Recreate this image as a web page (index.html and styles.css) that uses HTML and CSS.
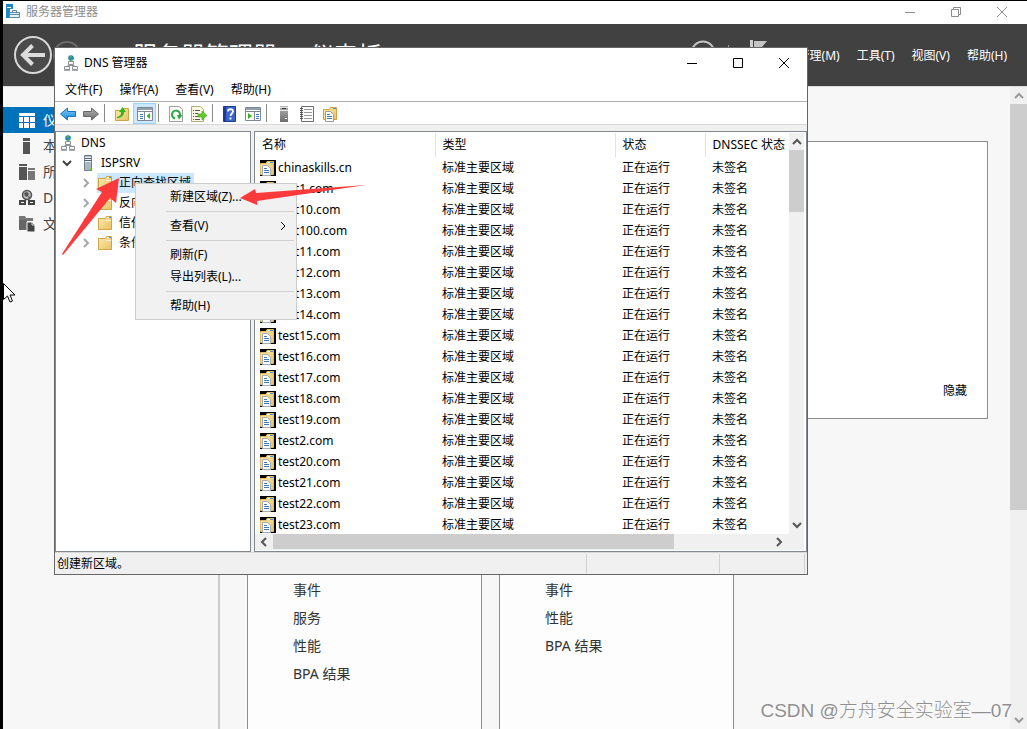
FILE: index.html
```html
<!DOCTYPE html>
<html lang="zh-CN">
<head>
<meta charset="utf-8">
<title>服务器管理器</title>
<link rel="stylesheet" href="styles.css">
</head>
<body>
<svg class="sprite" aria-hidden="true">
  <defs>
    <linearGradient id="gFold" x1="0" y1="0" x2="1" y2="1"><stop offset="0" stop-color="#fdebaf"/><stop offset="1" stop-color="#e8c264"/></linearGradient>
    <linearGradient id="gBlue" x1="0" y1="0" x2="0" y2="1"><stop offset="0" stop-color="#7fd2fb"/><stop offset="1" stop-color="#1583d6"/></linearGradient>
    <linearGradient id="gGray" x1="0" y1="0" x2="0" y2="1"><stop offset="0" stop-color="#b5b5b5"/><stop offset="1" stop-color="#6d6d6d"/></linearGradient>
  </defs>
  <symbol id="folder" viewBox="0 0 16 16">
    <path d="M1.500 3.500h7l1-2h5v13h-13z" fill="url(#gFold)" stroke="#d0a548"/>
    <path d="M10 2.500h3" stroke="#fff"/><path d="M12 2.500h2" stroke="#3f95dd"/>
    <path d="M9 5.500h5" stroke="#fff3c8"/>
  </symbol>
  <symbol id="zone" viewBox="0 0 16 16">
    <path d="M0 0h16v16H0z" fill="#000"/>
    <path d="M.5 3.500H6l1-2h6.500v13H.5z" fill="url(#gFold)" stroke="#e3bd62"/>
    <path d="M8 2.500h2" stroke="#fff"/><path d="M10 2.500h3" stroke="#3f95dd"/>
    <path d="M2.500 5.500h5l3 3v7h-8z" fill="#fff" stroke="#a8acb4"/>
    <path d="M4 8.500h3M4 10.500h5M4 12.500h5" stroke="#3c78c0"/>
  </symbol>
  <symbol id="dns" viewBox="0 0 16 16">
    <circle cx="8" cy="3" r="2.800" fill="#2f74c8"/><path d="M6 2l2-1.500L9.500 2 7.500 3.500zM8 4h2l-1 2H7z" fill="#35c04a"/>
    <path d="M5.500 6.500h5v3h-5z" fill="#f4f4f4" stroke="#8c9097"/>
    <path d="M4.500 10.500h7M1.500 11.500h5v3h-5zM9.500 11.500h5v3h-5z" fill="#f4f4f4" stroke="#8c9097"/>
    <path d="M1 15.500h6M9 15.500h6" stroke="#a8acb4"/>
  </symbol>
  <symbol id="server" viewBox="0 0 16 16">
    <path d="M4.500.5h7v15h-7z" fill="#a9b7c2" stroke="#72808c"/>
    <path d="M5 2.500h6M5 4.500h6M5 6.500h6" stroke="#f4f7f9"/><path d="M5 3.500h6M5 5.500h6" stroke="#51606b"/>
    <path d="M9 13h2v2H9z" fill="#7be01e"/>
  </symbol>
  <symbol id="chev" viewBox="0 0 10 10"><path d="M3 1l4 4-4 4" fill="none" stroke="currentColor" stroke-width="2"/></symbol>
  <symbol id="more" viewBox="0 0 10 10"><path d="M3 1l4 4-4 4" fill="none" stroke="currentColor"/></symbol>
  <symbol id="min" viewBox="0 0 12 12"><path d="M1 6.500h10" stroke="currentColor"/></symbol>
  <symbol id="max" viewBox="0 0 12 12"><path d="M1.500 1.500h9v9h-9z" fill="none" stroke="currentColor"/></symbol>
  <symbol id="restore" viewBox="0 0 12 12"><path d="M1.500 3.500h7v7h-7zM3.500 3.500v-2h7v7h-2" fill="none" stroke="currentColor"/></symbol>
  <symbol id="close" viewBox="0 0 12 12"><path d="M1 1l10 10M11 1L1 11" stroke="currentColor"/></symbol>
</svg>

<div class="manager">
  <header class="manager-title">
    <svg class="i16" viewBox="0 0 16 16"><path d="M1 0h7v5H5v9H1z" fill="#1e86c8"/><path d="M2 3.500h4" stroke="#fff"/><path d="M4.500 8.500h10v5h-10z" fill="#e8f1f7" stroke="#5d86a0"/><path d="M7.500 8V6.500h4V8M4 10.500h11" fill="none" stroke="#5d86a0"/></svg>
    <span>服务器管理器</span>
    <div class="caption">
      <button aria-label="最小化"><svg class="i12"><use href="#min"/></svg></button>
      <button aria-label="还原"><svg class="i12"><use href="#restore"/></svg></button>
      <button aria-label="关闭"><svg class="i12"><use href="#close"/></svg></button>
    </div>
  </header>

  <div class="banner">
    <button class="nav-back" aria-label="后退"><svg width="40" height="40" viewBox="0 0 40 40"><circle cx="20" cy="20" r="18" fill="#4b4b4b" stroke="#d8d8d8" stroke-width="2"/><path d="M32 20H11M19.500 10.500L10 20l9.500 9.500" fill="none" stroke="#dcdcdc" stroke-width="4"/></svg></button>
    <button class="nav-next" aria-label="前进"><svg width="28" height="28" viewBox="0 0 28 28"><circle cx="14" cy="14" r="13" fill="none" stroke="#6b6b6b" stroke-width="2"/></svg></button>
    <h1>服务器管理器<span class="dot">·</span>仪表板</h1>
    <svg class="banner-icons" width="80" height="32" viewBox="0 0 80 32"><circle cx="15" cy="14" r="11.500" fill="none" stroke="#c4c4c4" stroke-width="2"/><path d="M40.500 6v20" stroke="#999"/><path d="M62 1h3v27h-3z" fill="#d0d0d0"/><path d="M66 2h13l-5 6 5 6H66z" fill="#c4c4c4"/></svg>
    <nav class="banner-menu"><button>管理(M)</button><button>工具(T)</button><button>视图(V)</button><button>帮助(H)</button></nav>
  </div>

  <div class="manager-body">
    <nav class="side">
      <button class="side-item current"><svg class="i18" viewBox="0 0 18 18"><path d="M1 2h16v3H1zM1 6h4v5H1zM6 6h5v5H6zM12 6h5v5h-5zM1 12h4v5H1zM6 12h5v5H6zM12 12h5v5h-5z" fill="#fff"/></svg>仪表板</button>
      <button class="side-item"><svg class="i18" viewBox="0 0 18 18"><path d="M5 1h7v3H5zM5 5h7v12H5z" fill="#555"/></svg>本地服务器</button>
      <button class="side-item"><svg class="i18" viewBox="0 0 18 18"><path d="M1 1h8v2H1zM1 4h8v13H1z" fill="#555"/><path d="M10 5h7v2h-7zM10 8h7v9h-7z" fill="#777"/></svg>所有服务器</button>
      <button class="side-item"><svg class="i18" viewBox="0 0 18 18"><circle cx="9" cy="6" r="4.500" fill="#bbb" stroke="#555" stroke-width="1.500"/><path d="M6 4l3-1 2 2-2 3-2-1zM10 7l3 1-2 2z" fill="#555"/><path d="M1 11h7v5H1zM10 11h7v5h-7z" fill="#444"/><path d="M3 13.500h3M12 13.500h3" stroke="#fff"/></svg>DNS</button>
      <button class="side-item"><svg class="i18" viewBox="0 0 18 18"><path d="M1 1h6l1 2h7v3H1z" fill="#777"/><path d="M1 5h8v10H1z" fill="#666"/><path d="M9 7h5l3 3v7H9z" fill="#444" stroke="#f7f7f7"/><path d="M14 7v3h3" fill="none" stroke="#ddd"/></svg>文件和存储服务</button>
    </nav>
    <main class="dash">
      <section class="welcome"><button>隐藏</button></section>
      <div class="tiles">
        <section class="tile"><button>事件</button><button>服务</button><button>性能</button><button>BPA 结果</button></section>
        <section class="tile"><button>事件</button><button>性能</button><button>BPA 结果</button></section>
      </div>
    </main>
    <div class="vscroll page-scroll">
      <svg class="arrow up"><use href="#chev"/></svg><div class="page-thumb"></div><svg class="arrow down"><use href="#chev"/></svg>
    </div>
  </div>
</div>

<section class="window" aria-label="DNS 管理器">
  <header class="win-title">
    <svg class="i16"><use href="#dns"/></svg><span>DNS 管理器</span>
    <div class="caption">
      <button aria-label="最小化"><svg class="i12"><use href="#min"/></svg></button>
      <button aria-label="最大化"><svg class="i12"><use href="#max"/></svg></button>
      <button aria-label="关闭"><svg class="i12"><use href="#close"/></svg></button>
    </div>
  </header>
  <nav class="win-menu"><button>文件(F)</button><button>操作(A)</button><button>查看(V)</button><button>帮助(H)</button></nav>
  <div class="toolbar">
    <button aria-label="后退"><svg class="i16" viewBox="0 0 16 16"><path d="M.5 8l7-6v3.500h8v5h-8V14z" fill="url(#gBlue)" stroke="#1c6fb0"/></svg></button>
    <button aria-label="前进"><svg class="i16" viewBox="0 0 16 16"><path d="M15.500 8l-7-6v3.500h-8v5h8V14z" fill="url(#gGray)" stroke="#666"/></svg></button>
    <i></i>
    <button aria-label="上一级"><svg class="i16" viewBox="0 0 16 16"><path d="M1.500 4.500h7l1-2h5v12h-13z" fill="url(#gFold)" stroke="#cfa245"/><path d="M3 11c4-1 4-3 4-5H5l3.500-5L12 6h-2c0 4-3 6-7 6z" fill="#35b51c"/></svg></button>
    <button class="pressed" aria-label="显示控制台树"><svg class="i16" viewBox="0 0 16 16"><path d="M.5 1.500h15v13H.5z" fill="#fff" stroke="#7d8894"/><path d="M1 3h14" stroke="#8fa0b2" stroke-width="2"/><path d="M1 5.500h14M7.500 6v8" stroke="#7d8894"/><path d="M3 8.500h3M3 10.500h3M3 12.500h3" stroke="#3c78c0"/><path d="M13 7v6l-3.500-3z" fill="#35b51c"/></svg></button>
    <i></i>
    <button aria-label="刷新"><svg class="i16" viewBox="0 0 16 16"><path d="M1.500.5h10l3 3v12h-13z" fill="#fafafa" stroke="#a0a0a0"/><path d="M7 12.500A4 4 0 1 1 12 9" fill="none" stroke="#27a83a" stroke-width="2"/><path d="M9 9h5.500L11 13.500z" fill="#27a83a"/></svg></button>
    <button aria-label="导出列表"><svg class="i16" viewBox="0 0 16 16"><path d="M.5.5h9l3 3v12H.5z" fill="#fdf8e4" stroke="#b4a97c"/><path d="M2 4.500h1M4 4.500h5M2 7.500h1M4 7.500h3M2 10.500h1M4 10.500h3M2 13.500h1M4 13.500h5" stroke="#555"/><path d="M7 8h4V5l5 4.500-5 4.500v-3H7z" fill="#63c832" stroke="#3b9b1b" stroke-width=".6"/></svg></button>
    <i></i>
    <button aria-label="帮助"><svg class="i16" viewBox="0 0 16 16"><path d="M1.500.5h12v15h-12z" fill="#3b63cc" stroke="#1d3b8f"/><path d="M2 1h2v14H2z" fill="#1d3b8f"/><path d="M6 5.500c0-3 5-3 5 0 0 2-2.500 2-2.500 4.500M8.500 11.500v2" fill="none" stroke="#fff" stroke-width="1.800"/></svg></button>
    <button aria-label="操作窗格"><svg class="i16" viewBox="0 0 16 16"><path d="M.5 1.500h15v13H.5z" fill="#fff" stroke="#7d8894"/><path d="M1 3h14" stroke="#8fa0b2" stroke-width="2"/><path d="M1 5.500h14M9.500 6v8" stroke="#7d8894"/><path d="M11 8.500h3M11 10.500h3M11 12.500h3" stroke="#3c78c0"/><path d="M3 7v6l4-3z" fill="#35b51c"/></svg></button>
    <i></i>
    <button aria-label="服务器"><svg class="i16" viewBox="0 0 16 16"><path d="M4 0h8v16H4z" fill="url(#gGray)"/><path d="M4 1.500h8M4 4.500h8" stroke="#e4e4e4"/><path d="M6 2.500h4" stroke="#333"/><path d="M9 12h2v1H9z" fill="#eee"/></svg></button>
    <button aria-label="记录"><svg class="i16" viewBox="0 0 16 16"><path d="M2.500.5h12v15h-12z" fill="#fafafa" stroke="#6d6d6d"/><path d="M5 3.500h8M5 6.500h8M5 9.500h8M5 12.500h8" stroke="#999"/><path d="M1 2.500h3M1 4.500h3M1 6.500h3M1 8.500h3M1 10.500h3M1 12.500h3" stroke="#555"/></svg></button>
    <button aria-label="新建区域"><svg class="i16" viewBox="0 0 16 16"><path d="M1.500 3.500h6l1-2h6v12h-13z" fill="url(#gFold)" stroke="#cfa245"/><path d="M11 2.500h3" stroke="#3f95dd"/><path d="M3.500 5.500h5l3 3v7h-8z" fill="#fff" stroke="#9b9b9b"/><path d="M5 8.500h3M5 10.500h5M5 12.500h5" stroke="#3c78c0"/></svg></button>
  </div>
  <div class="panes">
    <ul class="tree">
      <li class="root"><svg class="i16"><use href="#dns"/></svg><span>DNS</span></li>
      <li class="host"><svg class="twist open"><use href="#chev"/></svg><svg class="i16"><use href="#server"/></svg><span>ISPSRV</span></li>
      <li class="leaf"><svg class="twist"><use href="#chev"/></svg><div class="node selected"><svg class="i16"><use href="#folder"/></svg><span>正向查找区域</span></div></li>
      <li class="leaf"><svg class="twist"><use href="#chev"/></svg><div class="node"><svg class="i16"><use href="#folder"/></svg><span>反向查找区域</span></div></li>
      <li class="leaf"><svg class="twist"><use href="#chev"/></svg><div class="node"><svg class="i16"><use href="#folder"/></svg><span>信任点</span></div></li>
      <li class="leaf"><svg class="twist"><use href="#chev"/></svg><div class="node"><svg class="i16"><use href="#folder"/></svg><span>条件转发器</span></div></li>
    </ul>
    <div class="list">
      <div class="rows">
        <table>
          <colgroup><col class="c-name"><col class="c-type"><col class="c-state"><col></colgroup>
          <thead><tr><th>名称</th><th>类型</th><th>状态</th><th>DNSSEC 状态</th></tr></thead>
          <tbody id="zones"></tbody>
        </table>
      </div>
      <div class="vscroll list-v"><svg class="arrow up"><use href="#chev"/></svg><div class="list-thumb"></div><svg class="arrow down"><use href="#chev"/></svg></div>
      <div class="list-h"><svg class="arrow left"><use href="#chev"/></svg><div class="track"><div class="h-thumb"></div></div><svg class="arrow"><use href="#chev"/></svg></div>
    </div>
  </div>
  <footer class="status"><span class="grow">创建新区域。</span><span class="mid"></span><span class="end"></span></footer>
</section>

<div class="context" role="menu">
  <button role="menuitem">新建区域(Z)...</button>
  <hr>
  <button role="menuitem">查看(V)<svg class="more"><use href="#more"/></svg></button>
  <hr>
  <button role="menuitem">刷新(F)</button>
  <button role="menuitem">导出列表(L)...</button>
  <hr>
  <button role="menuitem">帮助(H)</button>
</div>

<svg class="mark mark-tree" width="60" height="80" viewBox="0 0 60 80"><path d="M0 77L40 15 34 12 57 1 54 26 48 21 1 78z" fill="#fb3b3b"/></svg>
<svg class="mark mark-menu" width="126" height="24" viewBox="0 0 126 24"><path d="M0 15L15 6l1 4L126 2 17 18v4z" fill="#fb3b3b"/></svg>
<svg class="pointer" width="14" height="22" viewBox="0 0 14 22"><path d="M.5.5v16l4-3.500 2.500 6 2.500-1-2.500-6h5z" fill="#fff" stroke="#000"/></svg>
<div class="credit">CSDN @方舟安全实验室—07</div>
<script src="zones.js"></script>
</body>
</html>
```

FILE: styles.css
```css
* { box-sizing: border-box; }
body {
  margin: 0;
  padding: 1px 0 0 3px;
  height: 100vh;
  overflow: hidden;
  background: #000;
  color: #000;
  font: 12px/20px "Noto Sans", "Noto Sans CJK SC", sans-serif;
}
button {
  margin: 0;
  padding: 0;
  border: 0;
  background: none;
  color: inherit;
  font: inherit;
  text-align: left;
  white-space: nowrap;
}
svg { display: block; flex: none; }
.sprite { position: absolute; width: 0; height: 0; }
.i12 { width: 12px; height: 12px; }
.i16 { width: 16px; height: 16px; }
.i18 { width: 18px; height: 18px; }

/* server manager */
.manager { display: flex; flex-direction: column; height: 100%; background: #f7f7f7; }
.manager-title { display: flex; align-items: center; height: 23px; padding: 0 2px 2px 2px; gap: 5px; background: #fff; color: #8c8c8c; }
.caption { display: flex; align-self: stretch; margin-left: auto; }
.caption button { display: flex; align-items: center; justify-content: center; width: 46px; }
.banner { display: flex; align-items: center; height: 62px; padding: 0 20px 0 10px; background: #414141; color: #fff; }
.banner h1 { margin: 0 0 0 52px; font-size: 24px; line-height: 32px; font-weight: 400; white-space: nowrap; }
.dot { padding: 0 13px; }
.banner-icons { margin-left: auto; }
.banner-menu { display: flex; gap: 17px; margin-left: 30px; padding-top: 2px; }
.manager-body { display: flex; flex: 1; min-height: 0; border-top: 1px solid #ddd; }
.side { width: 217px; padding-top: 20px; border-right: 2px solid #ccc; font-size: 14px; }
.side-item { display: flex; align-items: center; gap: 7px; width: 100%; height: 26px; padding-left: 15px; color: #444; }
.side-item.current { background: #0072bc; color: #fff; }
.dash { display: flex; flex-direction: column; flex: 1; padding: 54px 22px 0 27px; }
.welcome { display: flex; align-items: flex-end; justify-content: flex-end; height: 278px; padding: 17px 20px; border: 1px solid #8d8d8d; background: #fff; }
.tiles { display: flex; flex: 1; gap: 17px; margin-top: 24px; }
.tile { display: flex; flex-direction: column; width: 235px; padding: 132px 45px 0; border: 1px solid #8d8d8d; border-bottom: 0; background: #fdfdfd; color: #333; font-size: 14px; line-height: 28px; }

/* scroll bars */
.vscroll { display: flex; flex-direction: column; align-items: center; background: #f0f0f0; color: #555; }
.arrow { width: 10px; height: 10px; }
.up { transform: rotate(-90deg); }
.down { margin-top: auto; transform: rotate(90deg); }
.left { transform: rotate(180deg); }
.page-scroll { width: 17px; padding: 4px 0; color: #999; }
.page-thumb { width: 100%; height: 406px; margin-top: 3px; background: #cdcdcd; }

/* DNS console window */
.window { position: absolute; left: 54px; top: 47px; display: flex; flex-direction: column; width: 754px; height: 528px; border: 1px solid #666; background: #f0f0f0; }
.win-title { display: flex; align-items: center; height: 29px; padding-left: 8px; gap: 5px; background: #fff; word-spacing: normal; }
.win-menu { display: flex; gap: 17px; height: 25px; padding: 3px 10px; border-bottom: 1px solid #b0b0ba; background: #fff; }
.toolbar { display: flex; height: 23px; padding: 1px 1px 0; border-bottom: 1px solid #d8d8d8; background: #fff; }
.toolbar button { display: flex; align-items: center; justify-content: center; width: 23px; height: 21px; }
.toolbar .pressed { border: 1px solid #99d1ff; background: #cce8ff; }
.toolbar i { width: 1px; margin: 1px 5px 2px 2px; background: #8a8a8a; }
.panes { display: flex; flex: 1; min-height: 0; gap: 3px; padding-top: 6px; }
.tree { width: 196px; margin: 0; padding: 1px 0; border: 1px solid #828790; background: #fff; list-style: none; }
.tree li { display: flex; align-items: center; height: 20px; }
.root { padding-left: 4px; gap: 5px; }
.host { padding-left: 6px; gap: 5px; }
.leaf { padding-left: 25px; gap: 6px; }
.twist { width: 10px; height: 10px; color: #a6a6a6; }
.twist.open { color: #404040; transform: rotate(90deg); }
.host .i16 { margin-left: 3px; }
.node { display: flex; align-items: center; gap: 6px; height: 20px; padding: 0 3px 0 0; }
.selected { background: #cce8ff; }
.list { display: grid; flex: 1; grid-template: 1fr 16px / 1fr 15px; min-width: 0; padding: 1px 2px 1px 0; border: 1px solid #828790; background: #fff; }
.rows { overflow: hidden; }
table { width: 100%; table-layout: fixed; border-collapse: collapse; }
.c-name { width: 180px; }
.c-type { width: 180px; }
.c-state { width: 90px; }
th, td { padding: 0 0 0 7px; overflow: hidden; font-weight: 400; text-align: left; white-space: nowrap; }
th { height: 24px; border-right: 1px solid #e2e2e2; }
th:last-child { border-right: 0; }
td { height: 21px; }
td:first-child { padding-left: 5px; }
.zone { display: flex; align-items: center; gap: 2px; }
.list-v { padding: 4px 0; }
.list-thumb { width: 100%; height: 62px; margin-top: 3px; background: #cdcdcd; }
.list-h { display: flex; align-items: center; grid-column: 1 / 3; padding: 0 20px 0 4px; background: #f0f0f0; color: #555; }
.track { flex: 1; align-self: stretch; padding: 0 100px 0 4px; }
.h-thumb { height: 15px; background: #cdcdcd; }
.status { display: flex; height: 22px; padding: 1px 2px; border-top: 1px solid #d8d8d8; }
.status span { border-right: 1px solid #d0d0d0; }
.grow { flex: 1; }
.mid { width: 133px; }
.end { width: 85px; }

/* overlays */
.context { position: absolute; left: 135px; top: 183px; width: 162px; padding: 2px; border: 1px solid #ccc; background: #f1f1f1; }
.context button { display: flex; align-items: center; justify-content: space-between; width: 100%; height: 22px; padding: 0 6px 0 32px; }
.context hr { height: 1px; margin: 3px 0 3px 28px; border: 0; background: #d0d0d0; }
.more { width: 10px; height: 10px; }
.mark-tree { position: absolute; left: 62px; top: 177px; }
.mark-menu { position: absolute; left: 240px; top: 183px; }
.pointer { position: absolute; left: 3px; top: 283px; }
.credit { position: absolute; right: 15px; bottom: 4px; color: #8f8f8f; font: 300 19px/28px "Liberation Sans", "Noto Sans CJK SC", sans-serif; text-shadow: 1px 1px 0 #fff; white-space: nowrap; }
```

FILE: zones.js
```js
const names = ["chinaskills.cn", "test1.com", "test10.com", "test100.com"];
for (let n = 11; n < 20; n++) names.push("test" + n + ".com");
names.push("test2.com", "test20.com", "test21.com", "test22.com", "test23.com");

document.getElementById("zones").innerHTML = names.map(name =>
  `<tr><td><div class="zone"><svg class="i16"><use href="#zone"/></svg><span>${name}</span></div></td>` +
  `<td>标准主要区域</td><td>正在运行</td><td>未签名</td></tr>`
).join("");
```
